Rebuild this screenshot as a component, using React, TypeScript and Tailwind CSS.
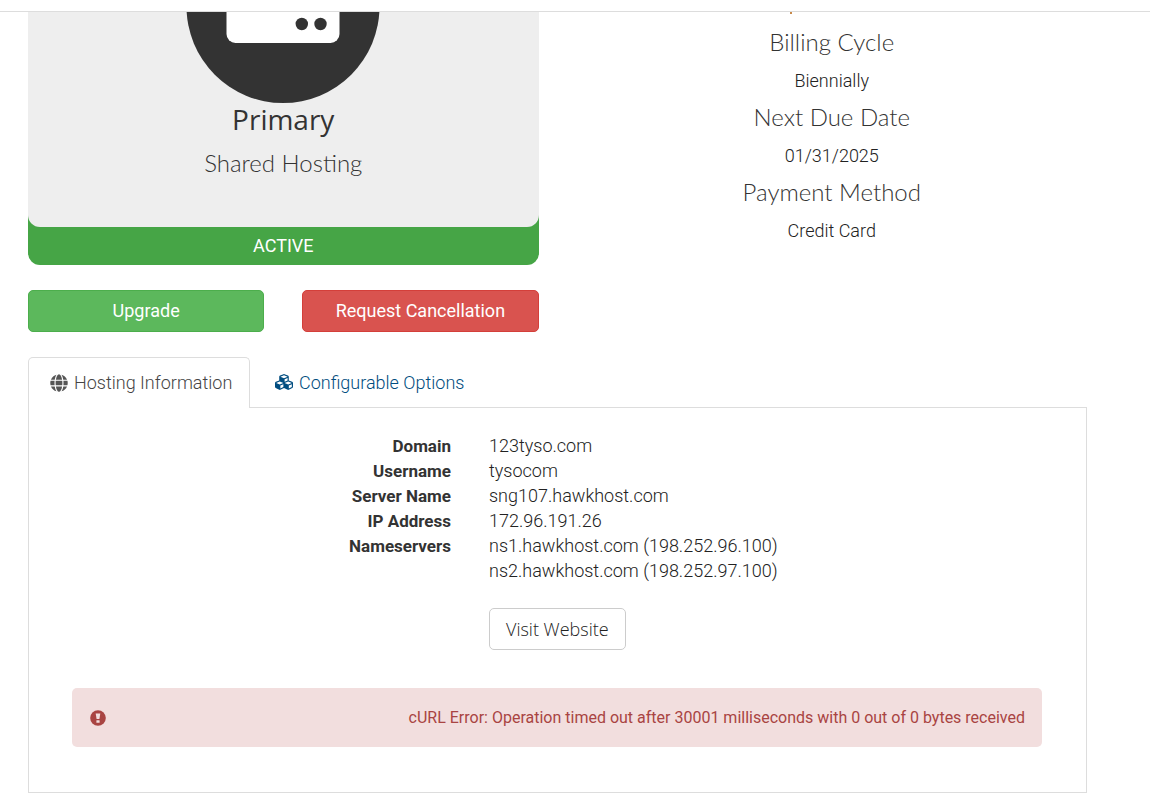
import type { ReactNode } from "react";
import { FaCubes, FaGlobe } from "react-icons/fa";

const billing = [
  { label: "Billing Cycle", value: "Biennially" },
  { label: "Next Due Date", value: "01/31/2025" },
  { label: "Payment Method", value: "Credit Card" },
];

const hosting: { label: string; values: string[] }[] = [
  { label: "Domain", values: ["123tyso.com"] },
  { label: "Username", values: ["tysocom"] },
  { label: "Server Name", values: ["sng107.hawkhost.com"] },
  { label: "IP Address", values: ["172.96.191.26"] },
  {
    label: "Nameservers",
    values: ["ns1.hawkhost.com (198.252.96.100)", "ns2.hawkhost.com (198.252.97.100)"],
  },
];

function ServerBadge() {
  return (
    <svg viewBox="0 6 194 91" className="block h-[91px] w-[194px]" aria-hidden="true">
      <circle cx="97" cy="0.5" r="96.5" fill="#333333" />
      <rect x="40.500" y="-20" width="113" height="57" rx="9" fill="#ffffff" />
      <circle cx="115.800" cy="18" r="6.200" fill="#333333" />
      <circle cx="134.500" cy="18" r="6.200" fill="#333333" />
    </svg>
  );
}

function AlertIcon() {
  return (
    <svg viewBox="0 0 16 16" className="size-4" aria-hidden="true">
      <circle cx="8" cy="8" r="7.800" fill="currentColor" />
      <path d="M5.700 3.600h4.600l-.9 5.400H6.600z" fill="#f2dede" />
      <rect x="6.400" y="10.200" width="3.200" height="2.600" rx="0.300" fill="#f2dede" />
    </svg>
  );
}

function ActionButton({ tone, children }: { tone: string; children: ReactNode }) {
  return (
    <button type="button" className={`h-[42px] rounded-[5px] border pb-[2px] text-white ${tone}`}>
      {children}
    </button>
  );
}

export default function App() {
  return (
    <div className="bg-white font-['Roboto','Liberation_Sans',sans-serif] text-[18px] leading-[25px] text-[#333333]">
      <header className="h-3 border-b border-[#dddddd]" />
      <main className="pr-[63px] pb-1 pl-7">
        <div className="grid grid-cols-2 gap-x-[38px]">
          <section>
            <div className="rounded-b-xl bg-[#46a546]">
              <div className="flex h-[215px] flex-col items-center rounded-b-xl bg-[#eeeeee]">
                <ServerBadge />
                <h3 className="font-['Open_Sans',sans-serif] text-[28px] leading-8">Primary</h3>
                <h4 className="mt-[14px] font-['Lato',sans-serif] text-[24px] leading-7 font-light">
                  Shared Hosting
                </h4>
              </div>
              <div className="pt-[6px] pb-[7px] text-center text-white">ACTIVE</div>
            </div>
            <div className="mt-[25px] grid grid-cols-2 gap-x-[38px]">
              <ActionButton tone="border-[#4cae4c] bg-[#5cb85c]">Upgrade</ActionButton>
              <ActionButton tone="border-[#d43f3a] bg-[#d9534f]">Request Cancellation</ActionButton>
            </div>
          </section>
          <section className="relative pt-[17px] text-center">
            <span className="absolute top-0 left-[213px] h-[2px] w-[2px] bg-[#c98a4a]" />
            {billing.map((item) => (
              <div key={item.label} className="mb-[11px]">
                <h4 className="font-['Lato',sans-serif] text-[24px] leading-[26px] font-light">
                  {item.label}
                </h4>
                <p className="mt-[13px] font-light text-[#222222]">{item.value}</p>
              </div>
            ))}
          </section>
        </div>

        <nav className="mt-[25px] flex font-light">
          <a
            href="#hosting"
            className="relative -mb-px flex h-[51px] w-[222px] items-center rounded-t-[5px] border border-b-0 border-[#dddddd] bg-white pb-px pl-[21px] text-[#444444]"
          >
            <FaGlobe className="mr-[6px] size-[18px] text-[#555555]" />
            Hosting Information
          </a>
          <a href="#options" className="flex h-[50px] items-center pl-[25px] text-[#004d80]">
            <FaCubes className="mr-[6px] size-[18px]" />
            Configurable Options
          </a>
        </nav>

        <section id="hosting" className="border border-[#dddddd] px-[43px] pt-[25px] pb-[45px]">
          <dl className="grid grid-cols-[379px_1fr] items-baseline gap-x-[38px]">
            {hosting.map((row) => (
              <div key={row.label} className="contents">
                <dt className="text-right text-[17px] leading-6 font-bold">{row.label}</dt>
                <dd className="font-light text-[#222222]">
                  {row.values.map((v) => (
                    <div key={v}>{v}</div>
                  ))}
                </dd>
              </div>
            ))}
          </dl>
          <button
            type="button"
            className="mt-[25px] ml-[417px] block h-[42px] rounded-[5px] border border-[#cccccc] bg-white px-4 font-['Open_Sans',sans-serif] font-light text-[#222222]"
          >
            Visit Website
          </button>
          <div
            role="alert"
            className="mt-[38px] mr-px flex h-[59px] items-center justify-between rounded-[5px] bg-[#f2dede] pr-[17px] pl-[18px] text-[16px] text-[#a94442]"
          >
            <AlertIcon />
            <p>cURL Error: Operation timed out after 30001 milliseconds with 0 out of 0 bytes received</p>
          </div>
        </section>
      </main>
    </div>
  );
}
